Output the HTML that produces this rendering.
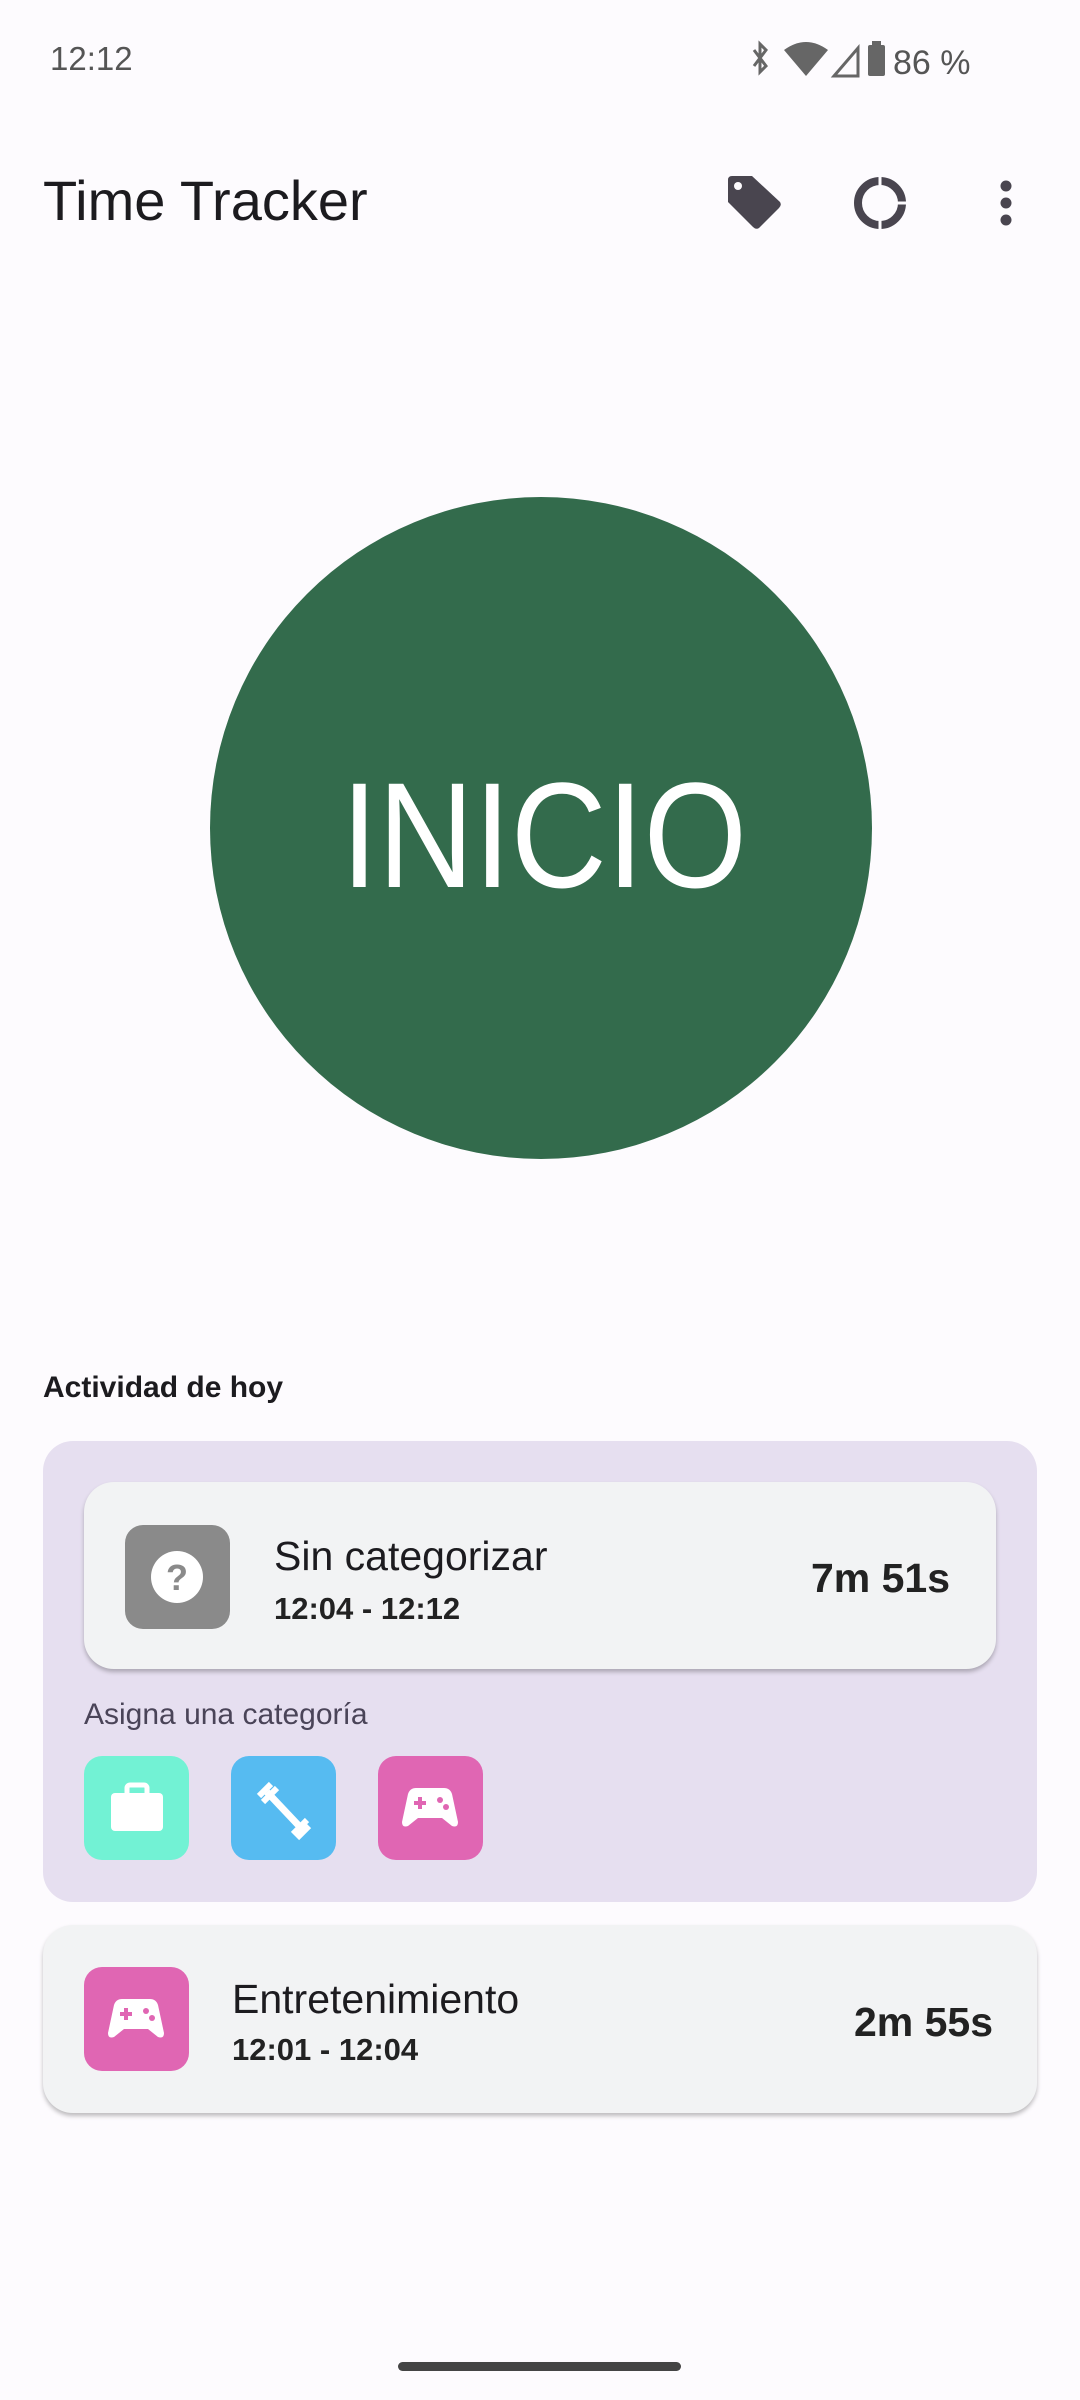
<!DOCTYPE html>
<html><head><meta charset="utf-8"><style>
*{margin:0;padding:0;box-sizing:border-box}
body{width:1080px;height:2400px;background:#fdfbfe;font-family:"Liberation Sans",sans-serif;position:relative;overflow:hidden;color:#1c1b1f}
.a{position:absolute;white-space:nowrap}
.card{position:absolute;border-radius:30px}
.sq{position:absolute;width:105px;height:104px;border-radius:18px}
</style></head><body>
<div class="a" style="left:50px;top:40px;font-size:33px;color:#555">12:12</div>
<svg class="a" style="left:748px;top:38px" width="270" height="44" viewBox="0 0 270 44">
<path d="M6 12 L18 28 L12 34 L12 6 L18 12 L6 28" stroke="#666" stroke-width="3" fill="none"/>
<path d="M58 38 L36 12 Q58 -4 80 12 Z" fill="#666"/>
<path d="M86 38 L110 10 L110 38 Z" fill="none" stroke="#666" stroke-width="3"/>
<rect x="120" y="7" width="17" height="31" rx="2" fill="#666"/><rect x="124" y="3" width="9" height="5" fill="#666"/>
<text x="145" y="36" font-size="34" fill="#555" font-family="Liberation Sans">86 %</text>
</svg>
<div class="a" style="left:43px;top:168px;font-size:56px;color:#1c1b1f">Time Tracker</div>
<svg class="a" style="left:726px;top:174px" width="58" height="58" viewBox="0 0 58 58"><path d="M2 6 Q2 2 6 2 L26 2 L54 28 Q56 31 53 34 L33 54 Q30 56 27 53 L2 28 Z" fill="#49454f"/><circle cx="12" cy="12" r="4" fill="#fdfbfe"/></svg>
<svg class="a" style="left:850px;top:173px" width="60" height="60" viewBox="0 0 60 60"><circle cx="30" cy="30" r="22" fill="none" stroke="#49454f" stroke-width="8"/><rect x="28.5" y="0" width="3" height="60" fill="#fdfbfe"/><rect x="30" y="28.5" width="30" height="3" fill="#fdfbfe"/></svg>
<svg class="a" style="left:994px;top:178px" width="24" height="50"><circle cx="12" cy="8" r="5.5" fill="#49454f"/><circle cx="12" cy="25" r="5.5" fill="#49454f"/><circle cx="12" cy="42" r="5.5" fill="#49454f"/></svg>
<div class="a" style="left:210px;top:497px;width:662px;height:662px;border-radius:50%;background:#336b4c"></div>
<svg class="a" style="left:0;top:700px" width="1080" height="260"><text x="341" y="187" font-size="150" fill="#fff" textLength="406" lengthAdjust="spacingAndGlyphs" font-family="Liberation Sans">INICIO</text></svg>
<div class="a" style="left:43px;top:1371px;font-size:30px;font-weight:bold;color:#1c1b1f">Actividad de hoy</div>
<div class="card" style="left:43px;top:1441px;width:994px;height:461px;background:#e6dff0"></div>
<div class="card" style="left:84px;top:1482px;width:912px;height:187px;background:#f2f3f4;box-shadow:0 3px 4px rgba(0,0,0,.25)"></div>
<div class="sq" style="left:125px;top:1525px;background:#8a8a8a"><svg width="105" height="104"><circle cx="52" cy="52" r="26" fill="#fff"/><text x="52" y="65" text-anchor="middle" font-size="36" font-weight="bold" fill="#8a8a8a" font-family="Liberation Sans">?</text></svg></div>
<div class="a" style="left:274px;top:1533px;font-size:41px">Sin categorizar</div>
<div class="a" style="left:274px;top:1591px;font-size:31px;font-weight:bold;color:#222">12:04 - 12:12</div>
<div class="a" style="right:130px;top:1555px;font-size:41px;font-weight:bold;color:#222">7m 51s</div>
<div class="a" style="left:84px;top:1698px;font-size:30px;color:#4a4458">Asigna una categoría</div>
<div class="sq" style="left:84px;top:1756px;background:#72f2d4"><svg width="105" height="104"><rect x="27" y="37" width="52" height="38" rx="4" fill="#fff"/><rect x="43" y="29" width="20" height="12" rx="3" fill="none" stroke="#fff" stroke-width="5"/></svg></div>
<div class="sq" style="left:231px;top:1756px;background:#56bbf1"><svg width="105" height="104"><path d="M36 36 L70 72" stroke="#fff" stroke-width="7"/><path d="M28 40 L40 28 M32 46 L46 32 M62 78 L76 64 M66 82 L78 70" stroke="#fff" stroke-width="6"/></svg></div>
<div class="sq" style="left:378px;top:1756px;background:#e066b3"><svg width="105" height="104"><path d="M30 38 Q32 32 38 32 L66 32 Q72 32 74 38 L80 66 Q80 72 74 70 L64 62 L40 62 L30 70 Q24 72 24 66 Z" fill="#fff"/><path d="M36 47 h12 M42 41 v12" stroke="#e066b3" stroke-width="4"/><circle cx="62" cy="44" r="3" fill="#e066b3"/><circle cx="68" cy="51" r="3" fill="#e066b3"/></svg></div>
<div class="card" style="left:43px;top:1925px;width:994px;height:188px;background:#f2f3f4;box-shadow:0 3px 4px rgba(0,0,0,.25)"></div>
<div class="sq" style="left:84px;top:1967px;background:#e066b3"><svg width="105" height="104"><path d="M30 38 Q32 32 38 32 L66 32 Q72 32 74 38 L80 66 Q80 72 74 70 L64 62 L40 62 L30 70 Q24 72 24 66 Z" fill="#fff"/><path d="M36 47 h12 M42 41 v12" stroke="#e066b3" stroke-width="4"/><circle cx="62" cy="44" r="3" fill="#e066b3"/><circle cx="68" cy="51" r="3" fill="#e066b3"/></svg></div>
<div class="a" style="left:232px;top:1976px;font-size:41px">Entretenimiento</div>
<div class="a" style="left:232px;top:2032px;font-size:31px;font-weight:bold;color:#222">12:01 - 12:04</div>
<div class="a" style="right:87px;top:1999px;font-size:41px;font-weight:bold;color:#222">2m 55s</div>
<div class="a" style="left:398px;top:2362px;width:283px;height:9px;border-radius:5px;background:#444"></div>
</body></html>
